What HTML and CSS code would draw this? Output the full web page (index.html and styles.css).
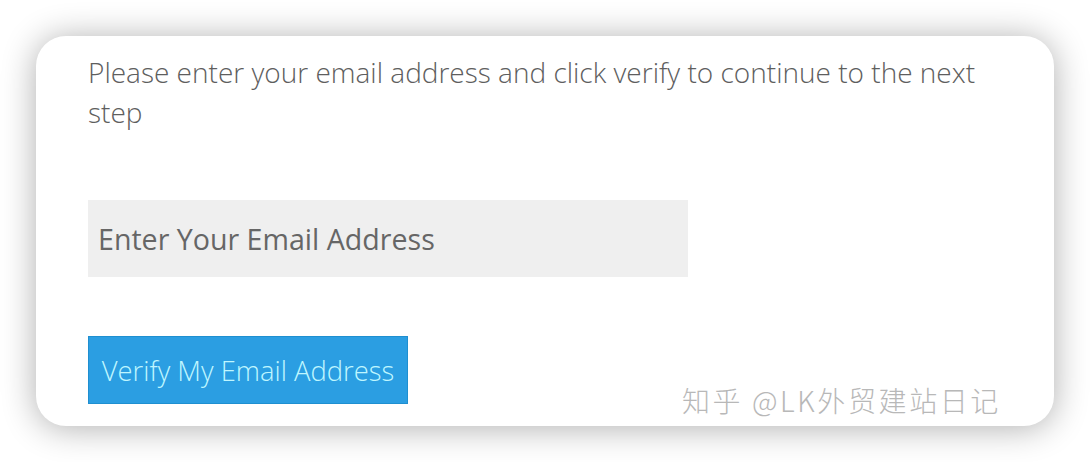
FILE: index.html
```html
<!DOCTYPE html>
<html>
<head>
<meta charset="utf-8">
<link rel="stylesheet" href="styles.css">
</head>
<body>
<div class="card">
  <p class="intro">Please enter your email address and click verify to continue to the next step</p>
  <div class="field">Enter Your Email Address</div>
  <div class="btn">Verify My Email Address</div>
  <div class="watermark">知乎 @LK外贸建站日记</div>
</div>
</body>
</html>
```
FILE: styles.css
```css
html, body {
  margin: 0;
  padding: 0;
  background: #ffffff;
}
body {
  width: 1090px;
  height: 462px;
  padding: 36px 36px 0 36px;
  box-sizing: border-box;
  overflow: hidden;
  font-family: "Open Sans", "Noto Sans", sans-serif;
}
.card {
  position: relative;
  width: 1018px;
  height: 390px;
  box-sizing: border-box;
  background: #fff;
  border-radius: 30px;
  box-shadow: 0 2px 34px rgba(0, 0, 0, 0.32);
  padding: 16px 52px 0 52px;
  display: flex;
  flex-direction: column;
  align-items: flex-start;
}
.intro {
  margin: 0;
  font-size: 28px;
  line-height: 40px;
  font-weight: 300;
  color: #5e5e5e;
  width: 910px;
}
.field {
  margin-top: 68px;
  width: 600px;
  height: 77px;
  box-sizing: border-box;
  background: #efefef;
  padding-left: 10px;
  display: flex;
  align-items: center;
  font-size: 28.6px;
  color: #666;
}
.btn {
  margin-top: 59px;
  width: 320px;
  height: 68px;
  box-sizing: border-box;
  background: #2b9ee2;
  border: 1px solid #1f8fd0;
  display: flex;
  align-items: center;
  justify-content: center;
  font-size: 27.4px;
  font-weight: 300;
  color: #bff6ff;
}
.watermark {
  position: absolute;
  left: 646px;
  top: 346px;
  font-family: "Noto Sans CJK SC", "Noto Sans", sans-serif;
  font-size: 28px;
  line-height: 36px;
  font-weight: 300;
  color: #b8b8b8;
  text-shadow: 0 0 2px #fff;
  letter-spacing: 2.6px;
}
```
